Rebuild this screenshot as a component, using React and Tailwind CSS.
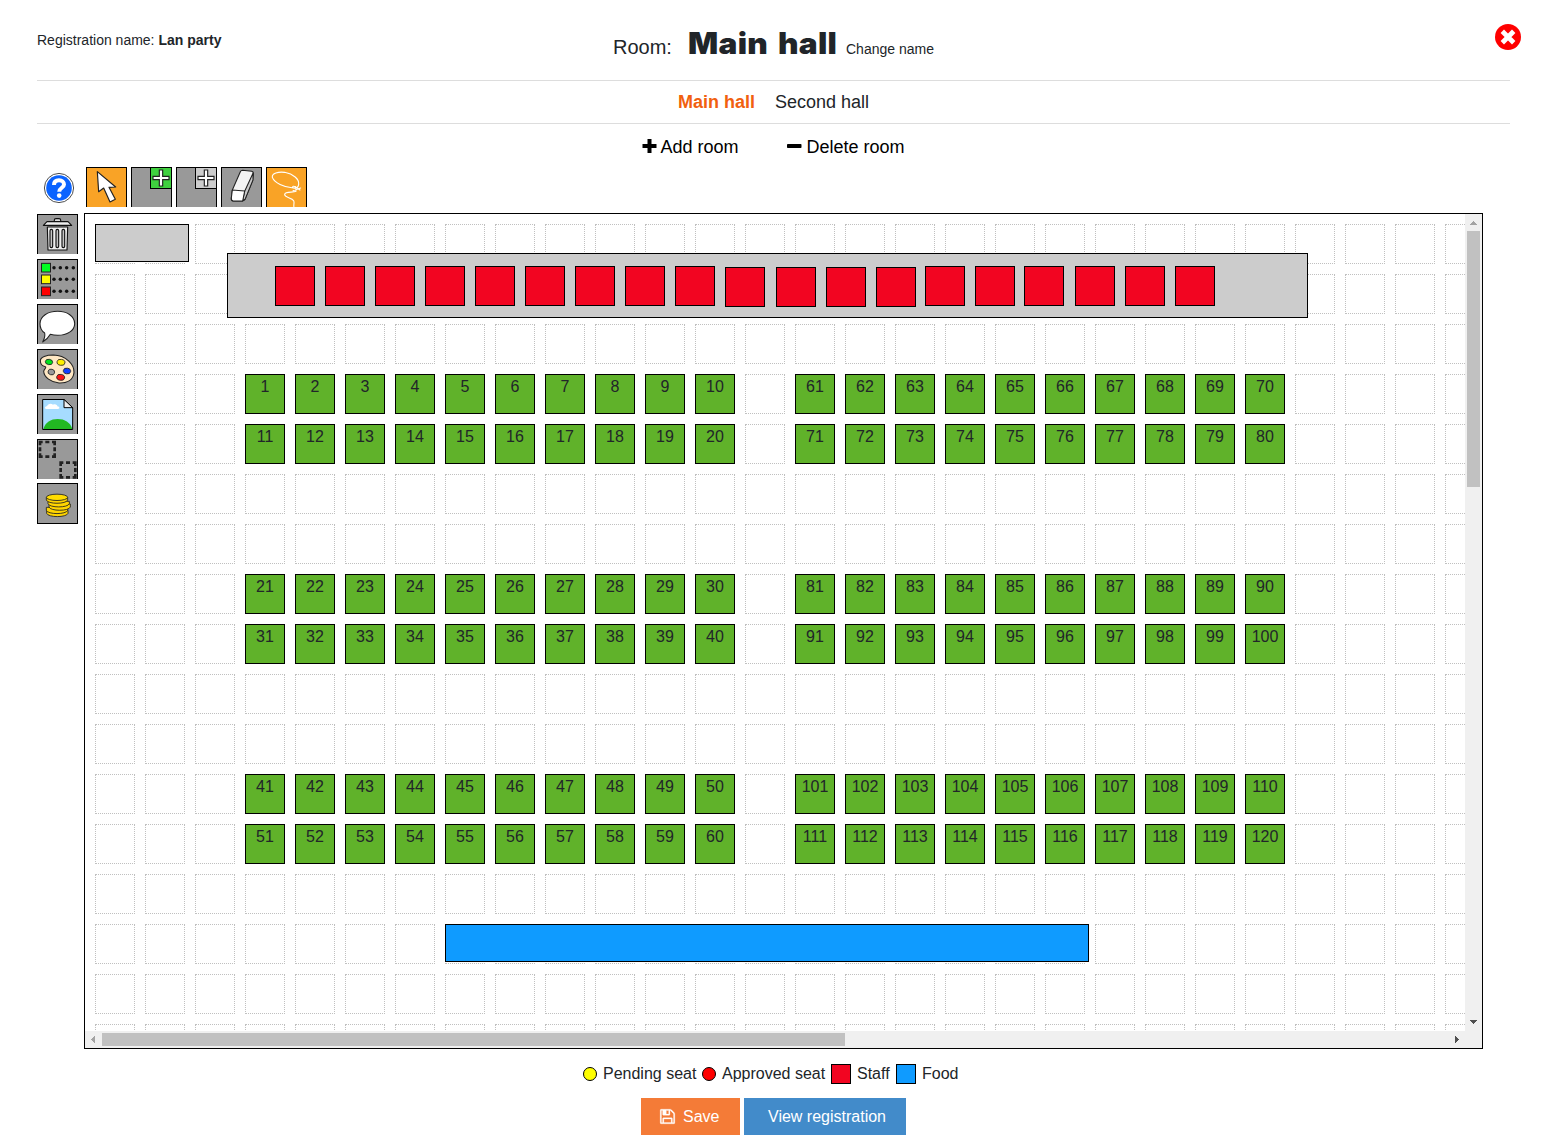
import React from 'react';

/* ---------- toolbar drawings (three units to a pixel) ---------- */

const Tile = ({ x, y, h = 120, fill = '#999999', children, label }) => (
  <button aria-label={label} className="block shrink-0">
    <svg
      width="41"
      height={h / 3}
      viewBox={`${x} ${y} 123 ${h}`}
      className="block"
    >
      <rect x={x + 1.5} y={y + 1.5} width="120" height={h === 123 ? 120 : 140} fill={fill} stroke="#000" strokeWidth="3" />
      {children}
    </svg>
  </button>
);

const CROSS = 'M-5-24H5V-5H24V5H5V24H-5V5H-24V-5H-5Z';

const HelpIcon = () => (
  <svg width="32" height="32" viewBox="0 0 32 32" className="block">
    <circle cx="16" cy="16" r="14.6" fill="#fff" stroke="#3a3a3a" strokeWidth="0.9" />
    <circle cx="16" cy="16" r="12.8" fill="#0a63ff" />
    <path d="M11 13C11 9.700 13.200 8.300 16 8.300C19 8.300 21 10 21 12.600C21 15.800 16.200 15.800 16.200 19.800" fill="none" stroke="#fff" strokeWidth="4" />
    <circle cx="16.200" cy="23.600" r="2.300" fill="#fff" />
  </svg>
);

const CursorTile = () => (
  <Tile x={168} y={21} fill="#f9a326" label="Select">
    <path d="M202 35L206 95L221 84L240 126L256 118L237 82L257 81Z" fill="#fff" stroke="#222" strokeWidth="3.5" strokeLinejoin="round" />
  </Tile>
);

const AddTile = ({ fill, label }) => (
  <Tile x={303} y={21} label={label}>
    <rect x="361.5" y="22.5" width="63" height="63" fill={fill} stroke="#000" strokeWidth="3" />
    <path d={CROSS} transform="translate(393 54)" fill="#fff" stroke="#222" strokeWidth="3.5" />
  </Tile>
);

const EraserTile = () => (
  <Tile x={573} y={21} label="Erase">
    <g stroke="#222" strokeWidth="3.2" strokeLinejoin="round">
      <path d="M607 90L631 35Q633 31 638 31L665 34Q671 35 670 43L668 60L646 116Q643 122 637 123L610 123Q603 122 604 114Z" fill="#f4f4f4" />
      <path d="M644 94L669 40L669 60L645 118L638 122Z" fill="#c9c9c9" />
      <path d="M607 90L644 93L638 123L610 123Q603 122 604 114Z" fill="#fff" />
    </g>
  </Tile>
);

const LassoTile = () => (
  <Tile x={708} y={21} fill="#f9a326" label="Lasso">
    <g fill="none" stroke="#fff" strokeWidth="3.3" strokeLinecap="round">
      <path d="M790 84C762 82 733 68 727 52C725 39 745 35 764 37C790 42 808 57 806 73C805 82 799 86 790 84C786 80 789 77 795 80L810 90" />
      <path d="M789 92L812 84M797 80L798 94C790 99 766 93 764 103C762 113 786 112 791 122C794 128 790 134 792 142" />
    </g>
  </Tile>
);

const TrashTile = () => (
  <Tile x={21} y={27} label="Delete">
    <g stroke="#111" strokeWidth="3.4" strokeLinejoin="round">
      <path d="M73 51V45Q73 41 78 41H87Q92 41 92 45V51" fill="#ddd" />
      <path d="M51 50H114L125 61H40Z" fill="#eee" />
      <path d="M52 66H113L111 135H54Z" fill="#eeeeee" />
      <rect x="60" y="73" width="8" height="55" rx="4" fill="#c4c4c4" />
      <rect x="78" y="73" width="8" height="55" rx="4" fill="#c4c4c4" />
      <rect x="96" y="73" width="8" height="55" rx="4" fill="#c4c4c4" />
    </g>
  </Tile>
);

const LIST_ROWS = [
  [188, '#00ff21'],
  [223, '#ffff00'],
  [259, '#ff0000'],
];

const ListTile = () => (
  <Tile x={21} y={162} label="Legend">
    {LIST_ROWS.map(([y, c]) => (
      <g key={y}>
        <rect x="34.5" y={y - 13} width="27" height="26" fill={c} stroke="#222" strokeWidth="3" />
        {[72, 91, 110, 130].map((x) => (
          <circle key={x} cx={x} cy={y} r="5.2" fill="#111" />
        ))}
      </g>
    ))}
  </Tile>
);

const BubbleTile = () => (
  <Tile x={21} y={297} label="Comment">
    <path d="M44 384C34 377 30 367 30 356C30 334 53 319 83 319C112 319 134 334 134 356C134 377 111 391 83 391C75 391 68 390 61 388C56 397 48 405 38 411C43 402 46 393 44 384Z" fill="#fff" stroke="#222" strokeWidth="3.2" strokeLinejoin="round" />
  </Tile>
);

const PaletteTile = () => (
  <Tile x={21} y={12} label="Colours">
    <path d="M31 47C31 36 49 30 70 30C108 31 133 58 132 82C130 104 112 115 87 114C63 112 42 97 41 79C43 71 49 70 47 66C43 62 32 66 31 47Z" fill="#ffe8c4" stroke="#222" strokeWidth="3.2" />
    <g stroke="#222" strokeWidth="2.4">
      <ellipse cx="57" cy="51" rx="11" ry="8" fill="#00e01c" transform="rotate(10 57 51)" />
      <ellipse cx="93" cy="52" rx="12" ry="9" fill="#fff000" transform="rotate(10 93 52)" />
      <ellipse cx="64" cy="81" rx="10" ry="8.5" fill="#999" transform="rotate(15 64 81)" />
      <ellipse cx="111" cy="78" rx="11" ry="8.5" fill="#0f3fff" transform="rotate(10 111 78)" />
      <ellipse cx="92" cy="97" rx="12" ry="9" fill="#f81414" transform="rotate(10 92 97)" />
    </g>
  </Tile>
);

const PictureTile = () => (
  <Tile x={21} y={147} label="Background">
    <path d="M38 163.500H102L128 188V253.500H38Z" fill="#a6dcff" />
    <path d="M40 252C46 232 62 222 83 222C104 222 121 232 127 252Z" fill="#22b822" />
    <path d="M49 192C43 192 44 184 51 184C53 175 65 174 69 179C76 176 83 180 82 184C90 185 90 192 84 192Z" fill="#fff" />
    <path d="M38 163.500H102L128 188V253.500H38Z" fill="none" stroke="#000" strokeWidth="3" />
    <path d="M102 163.500V188H128Z" fill="#eee" stroke="#000" strokeWidth="3" strokeLinejoin="round" />
  </Tile>
);

const DashTile = () => (
  <Tile x={21} y={282} label="Group">
    <g fill="none" stroke="#222" strokeWidth="8">
      <path d="M30 301V291H38M46 291H58M66 291H74V301M74 307V319M74 325V335H66M58 335H46M38 335H30V325M30 319V307" />
      <path d="M92 363V353H100M108 353H120M128 353H136V363M136 369V381M136 387V397H128M120 397H108M100 397H92V387M92 381V369" />
    </g>
  </Tile>
);

// [centre x, top y, rim height], bottom coin first
const COINS = [
  [82, 496, 9],
  [81, 487, 9],
  [89, 477, 9],
  [86, 469, 7],
  [81, 458, 7],
];

const CoinsTile = () => (
  <Tile x={21} y={414} h={123} label="Price">
    {COINS.map(([x, y, rim]) => (
      <path
        key={y}
        d={`M${x - 32} ${y}V${y + rim}C${x - 28} ${y + rim + 13} ${x + 28} ${y + rim + 13} ${x + 32} ${y + rim}V${y}Z`}
        stroke="#222"
        strokeWidth="2.6"
        fill="#ffd500"
      />
    ))}
    <ellipse cx="81" cy="457" rx="32" ry="9.500" fill="#ffdc00" stroke="#222" strokeWidth="2.6" />
  </Tile>
);

/* ---------- room plan ---------- */

const COLS = 28;
const ROWS = 17;
const CELLS = Array.from({ length: COLS * ROWS }, (_, i) => i);

// [column, row, first seat number] of each run of ten seats
const RUNS = [
  [3, 3, 1], [3, 4, 11], [3, 7, 21], [3, 8, 31], [3, 11, 41], [3, 12, 51],
  [14, 3, 61], [14, 4, 71], [14, 7, 81], [14, 8, 91], [14, 11, 101], [14, 12, 111],
];

const STAFF = [
  [190, 52], [240, 52], [290, 52], [340, 52], [390, 52], [440, 52], [490, 52],
  [540, 52], [590, 52], [640, 53], [691, 53], [741, 53], [791, 53], [840, 52],
  [890, 52], [939, 52], [990, 52], [1040, 52], [1090, 52],
];

const Plan = () => (
  <div className="relative h-[817px] w-[1380px] overflow-hidden bg-white">
    <div className="grid w-[1400px] grid-cols-[repeat(28,40px)] gap-[10px] pl-[10px] pt-[10px]">
      {CELLS.map((i) => (
        <div key={i} className="h-10 w-10 border border-dotted border-[#c0c0c0]" />
      ))}
    </div>
    <div className="absolute left-[10px] top-[10px] h-[38px] w-[94px] border border-black bg-[#cccccc]" />
    <div className="absolute left-[142px] top-[39px] h-[65px] w-[1081px] border border-black bg-[#cccccc]" />
    {STAFF.map(([left, top]) => (
      <div key={left} className="absolute h-10 w-10 border border-black bg-[#f20521]" style={{ left, top }} />
    ))}
    {RUNS.map(([c, r, first]) => (
      <div
        key={first}
        className="absolute flex gap-[10px]"
        style={{ left: 10 + c * 50, top: 10 + r * 50 }}
      >
        {Array.from({ length: 10 }, (_, i) => (
          <div key={i} className="h-10 w-10 border border-black bg-[#60b22a] text-center text-base leading-6 text-[#212529]">
            {first + i}
          </div>
        ))}
      </div>
    ))}
    <div className="absolute left-[360px] top-[710px] h-[38px] w-[644px] border border-black bg-[#0f9bff]" />
  </div>
);

const ScrollArrow = ({ d, fill }) => (
  <svg width="17" height="17" viewBox="0 0 17 17" className="block shrink-0" shapeRendering="crispEdges">
    <path d={d} fill={fill} />
  </svg>
);

const RoomCanvas = () => (
  <div className="grid h-[836px] w-[1399px] grid-cols-[1380px_17px] grid-rows-[817px_17px] border border-black bg-[#f0f0f0]">
    <Plan />
    <div className="flex flex-col items-center">
      <ScrollArrow d="M5 11V10H6V9H7V8H8V7H9V8H10V9H11V10H12V11Z" fill="#a3a3a3" />
      <div className="h-[256px] w-[13px] bg-[#c1c1c1]" />
      <div className="grow" />
      <ScrollArrow d="M5 6H12V7H11V8H10V9H9V10H8V9H7V8H6V7H5Z" fill="#505050" />
    </div>
    <div className="flex items-center">
      <ScrollArrow d="M10 5V12H9V11H8V10H7V9H6V8H7V7H8V6H9V5Z" fill="#a3a3a3" />
      <div className="h-[13px] w-[743px] bg-[#c1c1c1]" />
      <div className="grow" />
      <ScrollArrow d="M7 5V12H8V11H9V10H10V9H11V8H10V7H9V6H8V5Z" fill="#505050" />
    </div>
  </div>
);

/* ---------- page ---------- */

export default function App() {
  return (
    <div className="relative h-[1148px] w-[1543px] overflow-hidden bg-white pl-[37px] font-['Liberation_Sans',Arial,sans-serif] text-[#212529]">
      <button aria-label="Close" className="absolute left-[1495px] top-[24px]">
        <svg width="26" height="26" viewBox="0 0 26 26" className="block">
          <circle cx="13" cy="13" r="13" fill="#ff0000" />
          <path d="M9 9L17 17M17 9L9 17" stroke="#fff" strokeWidth="4.800" strokeLinecap="square" strokeLinejoin="round" />
        </svg>
      </button>

      <header className="grid h-[81px] w-[1473px] grid-cols-[1fr_321px_1fr] border-b border-[#dddddd]">
        <p className="pt-8 text-sm leading-4">
          Registration name: <b>Lan party</b>
        </p>
        <div className="flex items-baseline whitespace-nowrap pt-[22px]">
          <span className="w-[75px] text-xl leading-5">Room:</span>
          <h1 className="w-[158px] origin-left scale-x-[1.07] font-['Arial_Black',Inter,sans-serif] text-[29.5px] font-black leading-[42px] tracking-[0.3px] [word-spacing:3px]">
            Main hall
          </h1>
          <a className="text-sm leading-5">Change name</a>
        </div>
      </header>

      <nav className="flex h-[43px] w-[1473px] justify-center gap-5 border-b border-[#dddddd] text-lg leading-[42px]">
        <a className="font-bold text-[#f1600f]">Main hall</a>
        <a>Second hall</a>
      </nav>

      <div className="flex h-[43px] w-[1473px] justify-center gap-12 text-lg leading-[46px] text-black">
        <a className="flex gap-[3px]">
          <svg width="15" height="14" viewBox="0 0 15 14" className="mt-[15px] block">
            <path d="M7.500 2V12M2.500 7H12.500" stroke="#000" strokeWidth="4" strokeLinecap="square" />
          </svg>
          Add room
        </a>
        <a className="flex gap-[5px]">
          <svg width="15" height="14" viewBox="0 0 15 14" className="mt-[15px] block">
            <rect x="0" y="5" width="14.500" height="4" rx="0.800" fill="#000" />
          </svg>
          Delete room
        </a>
      </div>

      <div className="flex h-[46px] w-[1473px] items-start">
        <div className="w-[49px] pl-[6px] pt-[5px]">
          <HelpIcon />
        </div>
        <div className="flex gap-1">
          <CursorTile />
          <AddTile fill="#3fd13f" label="Add seats" />
          <AddTile fill="#cccccc" label="Add objects" />
          <EraserTile />
          <LassoTile />
        </div>
      </div>

      <div className="flex h-[836px] gap-[6px]">
        <div className="flex flex-col pt-px">
          <div className="flex h-[269px] flex-col gap-[5px]">
            <TrashTile />
            <ListTile />
            <BubbleTile />
            <PaletteTile />
            <PictureTile />
            <DashTile />
          </div>
          <CoinsTile />
        </div>
        <RoomCanvas />
      </div>

      <div className="ml-[546px] mt-[13px] flex h-6 items-center whitespace-nowrap text-base leading-6">
        <span className="h-[14px] w-[14px] rounded-full border border-black bg-[#ffff00]" />
        <span className="w-[105px] pl-[6px]">Pending seat</span>
        <span className="h-[14px] w-[14px] rounded-full border border-black bg-[#ff0000]" />
        <span className="ml-[6px] w-[109px]">Approved seat</span>
        <span className="h-5 w-5 border border-black bg-[#f20521]" />
        <span className="w-[45px] pl-[6px]">Staff</span>
        <span className="h-5 w-5 border border-black bg-[#0f9bff]" />
        <span className="pl-[6px]">Food</span>
      </div>

      <div className="ml-[604px] mt-3 flex gap-1 text-base leading-[37px] text-white">
        <button className="flex h-[37px] w-[99px] items-center gap-[7px] bg-[#f47b37] pl-[18px]">
          <svg width="17" height="17" viewBox="0 0 1792 1792" className="block" fill="#fff" stroke="#fff" strokeWidth="30">
            <path d="M512 1536h768v-384h-768v384zm896 0h128v-896q0-14-10-38.500t-20-34.500l-281-281q-10-10-34-20t-39-10v416q0 40-28 68t-68 28h-576q-40 0-68-28t-28-68v-416h-128v1280h128v-416q0-40 28-68t68-28h832q40 0 68 28t28 68v416zm-384-928v-320q0-13-9.500-22.500t-22.500-9.500h-192q-13 0-22.500 9.500t-9.500 22.500v320q0 13 9.500 22.500t22.500 9.500h192q13 0 22.500-9.500t9.500-22.500zm640 32v928q0 40-28 68t-68 28h-1344q-40 0-68-28t-28-68v-1344q0-40 28-68t68-28h928q40 0 88 20t76 48l280 280q28 28 48 76t20 88z" />
          </svg>
          Save
        </button>
        <button className="h-[37px] w-[162px] bg-[#428bca] pl-1">View registration</button>
      </div>
    </div>
  );
}
